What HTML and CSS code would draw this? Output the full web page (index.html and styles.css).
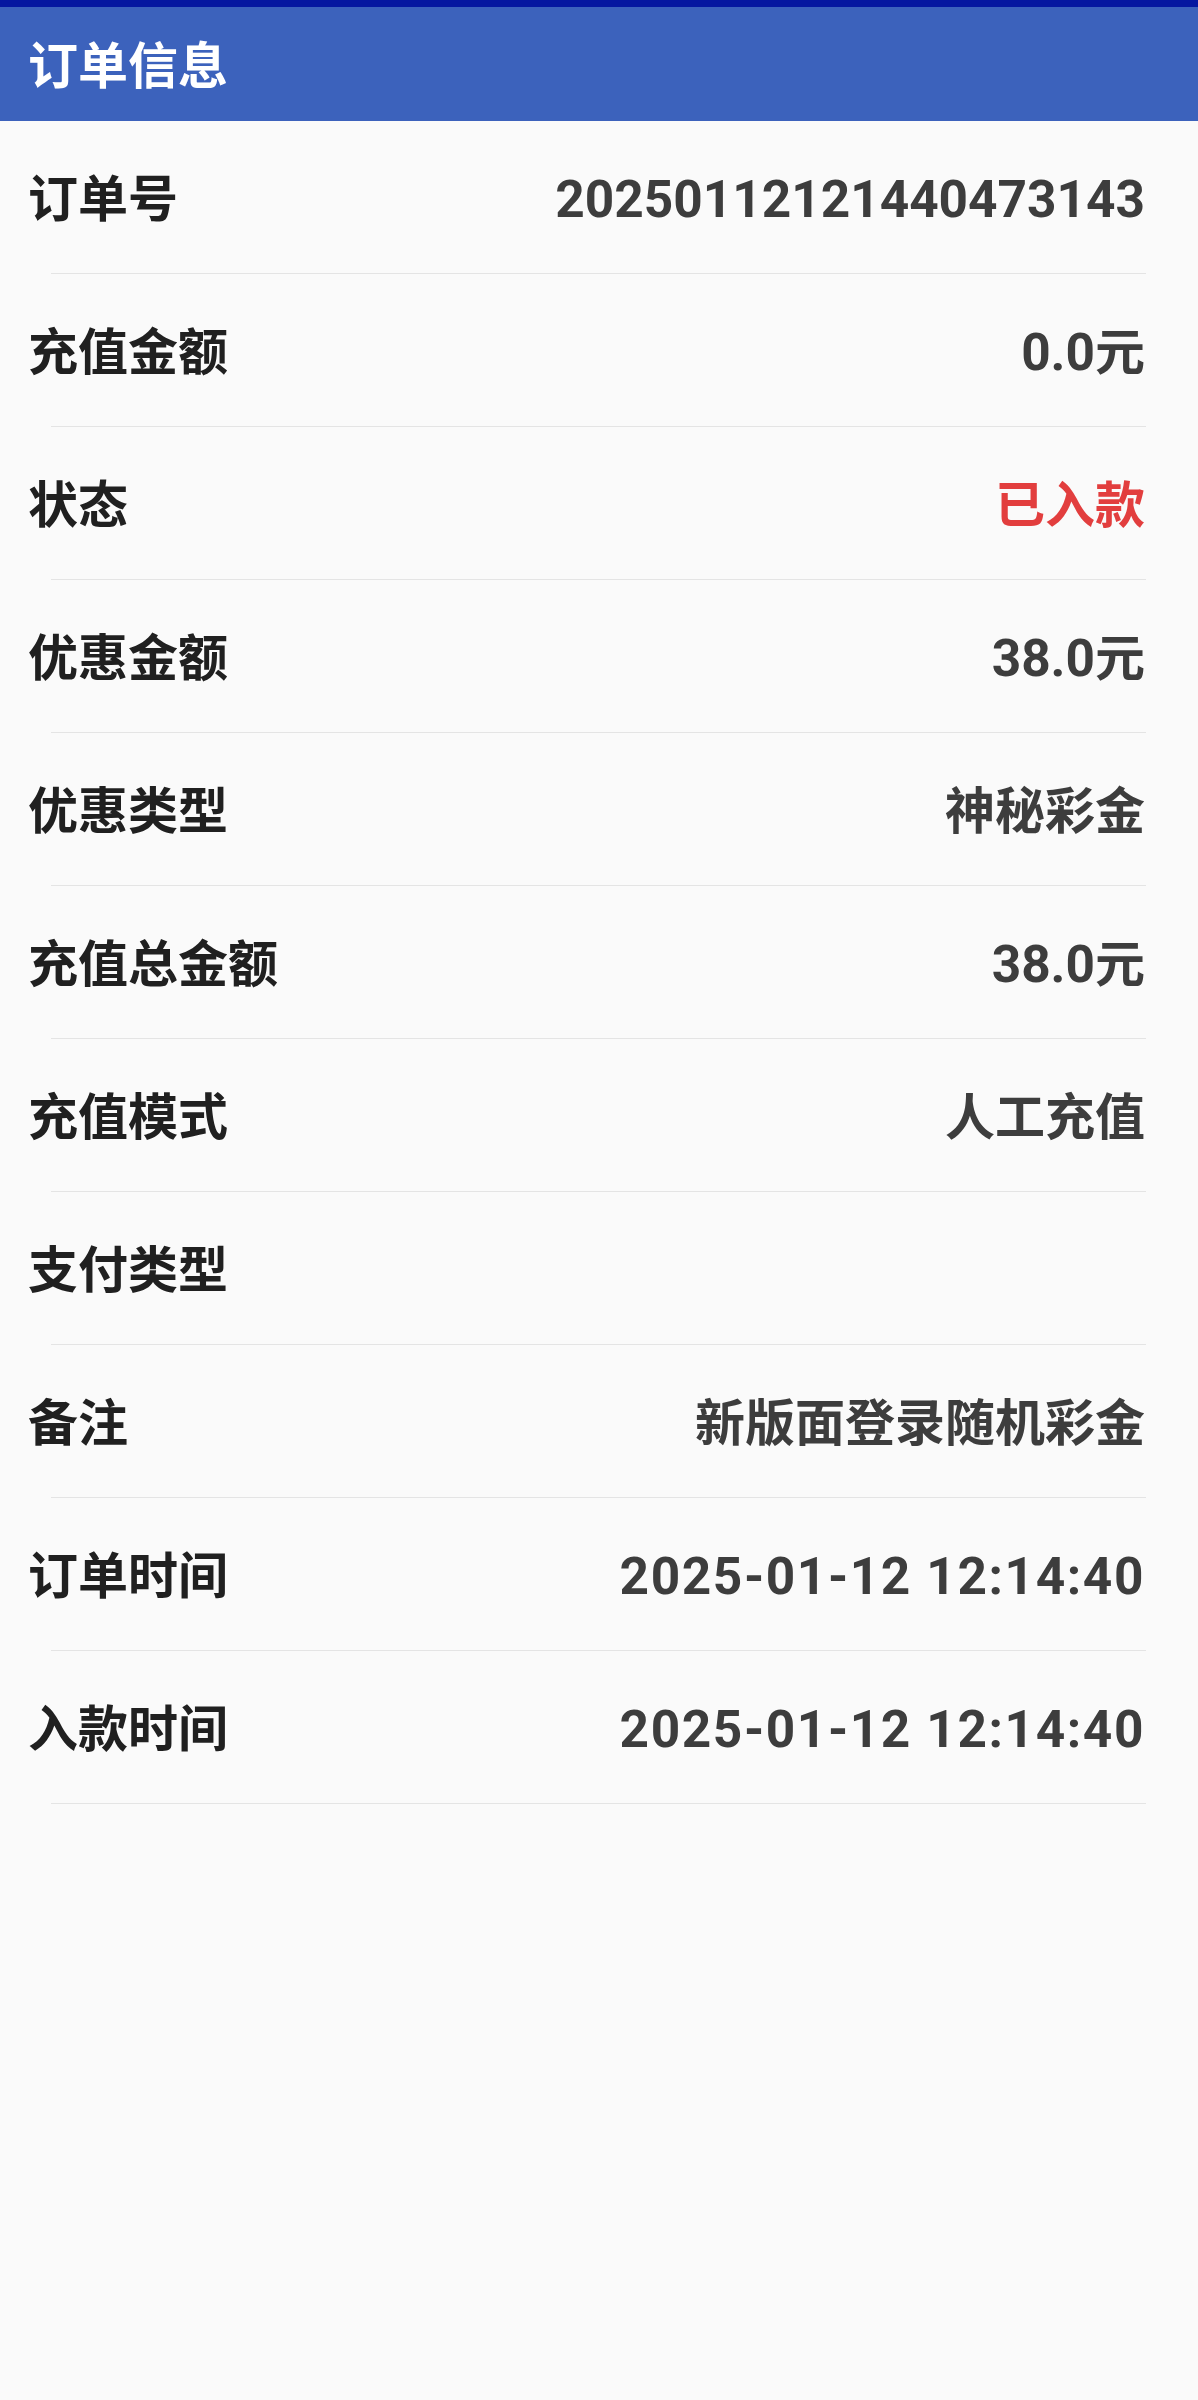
FILE: index.html
```html
<!DOCTYPE html>
<html lang="zh-CN">
<head>
  <meta charset="UTF-8">
  <title>订单信息</title>
  <link rel="stylesheet" href="styles.css">
</head>
<body>
  <div class="status-bar"></div>
  <header class="toolbar">
    <h1>订单信息</h1>
  </header>

  <div class="detail-list">
    <div class="item">
      <div class="row"><span class="label">订单号</span><span class="value num">20250112121440473143</span></div>
    </div>
    <div class="item">
      <div class="row"><span class="label">充值金额</span><span class="value"><span class="num">0.0</span>元</span></div>
    </div>
    <div class="item">
      <div class="row"><span class="label">状态</span><span class="value red">已入款</span></div>
    </div>
    <div class="item">
      <div class="row"><span class="label">优惠金额</span><span class="value"><span class="num">38.0</span>元</span></div>
    </div>
    <div class="item">
      <div class="row"><span class="label">优惠类型</span><span class="value">神秘彩金</span></div>
    </div>
    <div class="item">
      <div class="row"><span class="label">充值总金额</span><span class="value"><span class="num">38.0</span>元</span></div>
    </div>
    <div class="item">
      <div class="row"><span class="label">充值模式</span><span class="value">人工充值</span></div>
    </div>
    <div class="item">
      <div class="row"><span class="label">支付类型</span><span class="value"></span></div>
    </div>
    <div class="item">
      <div class="row"><span class="label">备注</span><span class="value">新版面登录随机彩金</span></div>
    </div>
    <div class="item">
      <div class="row"><span class="label">订单时间</span><span class="value num time">2025-01-12 12:14:40</span></div>
    </div>
    <div class="item">
      <div class="row"><span class="label">入款时间</span><span class="value num time">2025-01-12 12:14:40</span></div>
    </div>
  </div>
</body>
</html>
```

FILE: styles.css
```css
body {
  margin: 0;
  background-color: #fafafa;
  font-family: Roboto, "Noto Sans CJK SC", sans-serif;
  font-weight: 700;
}

.status-bar {
  height: 7px;
  background-color: #0517a0;
}

.toolbar {
  box-sizing: border-box;
  height: 114px;
  background-color: #3c62bc;
  display: flex;
  align-items: center;
  padding: 6px 0 0 28px;
}

.toolbar h1 {
  margin: 0;
  color: #fff;
  font-size: 50px;
  font-weight: 700;
  line-height: 1;
}

.item::after {
  content: "";
  display: block;
  height: 1px;
  margin: 0 52px 0 51px;
  background-color: #e4e4e4;
}

.row {
  box-sizing: border-box;
  height: 152px;
  display: flex;
  align-items: center;
  justify-content: space-between;
  padding: 6px 53px 0 28px;
  font-size: 50px;
  line-height: 1;
}

.label {
  color: #202020;
}

.value {
  color: #3d3d3d;
}

.num {
  font-size: 51.4px;
}

.time {
  letter-spacing: 1.6px;
}

.value.red {
  color: #e23e3e;
}
```
